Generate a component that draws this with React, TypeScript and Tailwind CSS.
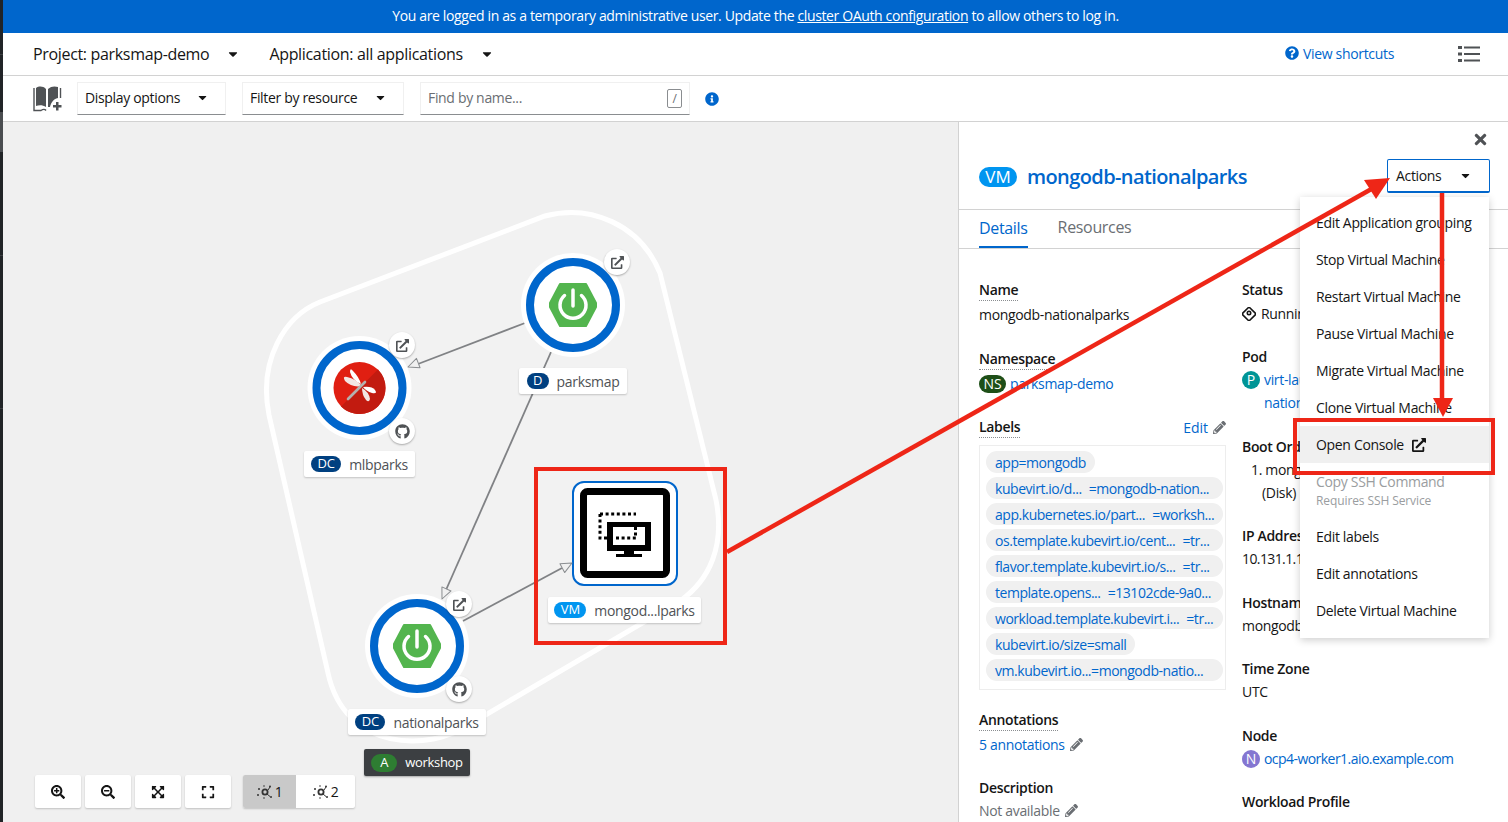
import { FaCaretDown, FaExpand, FaExpandArrowsAlt, FaExternalLinkAlt, FaGithub, FaInfoCircle, FaPencilAlt, FaQuestionCircle, FaSearchMinus, FaSearchPlus, FaTimes } from 'react-icons/fa'

const labels = [
    { text: 'app=mongodb' },
    { text: 'kubevirt.io/d... =mongodb-nation...', full: true },
    { text: 'app.kubernetes.io/part... =worksh...', full: true },
    { text: 'os.template.kubevirt.io/cent... =tr...', full: true },
    { text: 'flavor.template.kubevirt.io/s... =tr...', full: true },
    { text: 'template.opens... =13102cde-9a0...', full: true },
    { text: 'workload.template.kubevirt.i... =tr...', full: true },
    { text: 'kubevirt.io/size=small' },
    { text: 'vm.kubevirt.io...=mongodb-natio...', full: true },
]

const menuItems = [
    'Edit Application grouping',
    'Stop Virtual Machine',
    'Restart Virtual Machine',
    'Pause Virtual Machine',
    'Migrate Virtual Machine',
    'Clone Virtual Machine',
]

function Badge({ text, color, className = '' }: { text: string; color: string; className?: string }) {
    return (
        <span className={`inline-flex shrink-0 items-center justify-center rounded-full tracking-normal text-white ${color} ${className}`}>
            {text}
        </span>
    )
}

function NodeLabel({ badge, color, text, className, badgeWidth }: { badge: string; color: string; text: string; className: string; badgeWidth: string }) {
    return (
        <div className={`absolute flex h-[26px] items-center justify-center gap-2 rounded-[2px] bg-white text-[14px] text-[#4f5255] shadow-[0_1px_2px_rgba(0,0,0,0.2)] ${className}`}>
            <Badge text={badge} color={color} className={`h-[16px] text-[13px] ${badgeWidth}`} />
            <span>{text}</span>
        </div>
    )
}

function Decorator({ className, children }: { className: string; children: React.ReactNode }) {
    return (
        <div className={`absolute flex h-[26px] w-[26px] items-center justify-center rounded-full bg-white text-[15px] text-[#4f5255] shadow-[0_1px_2px_rgba(0,0,0,0.3)] ${className}`}>
            {children}
        </div>
    )
}

function Spring({ cx, cy }: { cx: number; cy: number }) {
    return (
        <g transform={`translate(${cx} ${cy})`}>
            <path d="M-13 -21 L13 -21 L23 -2 L23 2 L13 21 L-13 21 L-23 2 L-23 -2 Z" fill="#53b54e" stroke="#53b54e" strokeWidth="2" strokeLinejoin="round" />
            <path d="M-8.5 -9.5 A13 13 0 1 0 8.5 -9.5" fill="none" stroke="#fff" strokeWidth="3.5" strokeLinecap="round" />
            <path d="M0 -15 L0 1" stroke="#fff" strokeWidth="3.5" strokeLinecap="round" />
        </g>
    )
}

function Ring({ cx, cy, children }: { cx: number; cy: number; children: React.ReactNode }) {
    return (
        <g>
            <circle cx={cx} cy={cy} r="52" fill="#fff" />
            <circle cx={cx} cy={cy} r="43" fill="#fff" stroke="#0066cc" strokeWidth="8" />
            {children}
        </g>
    )
}

function Arrow({ x, y, angle }: { x: number; y: number; angle: number }) {
    return (
        <path transform={`translate(${x} ${y}) rotate(${angle})`} d="M0 0 L-11 -5 L-11 5 Z" fill="#f0f0f0" stroke="#8a8d90" strokeWidth="1" strokeLinejoin="round" />
    )
}

function Graph() {
    return (
        <svg className="absolute left-0 top-0" width="955" height="700" viewBox="3 122 955 700">
            <path
                d="M320 302 L545 216 C590 204 640 224 660 273 L716 500 C725 545 710 580 680 601 L470 724 C430 752 345 752 328 673 L269 415 C258 360 285 316 320 302 Z"
                fill="#f2f2f2"
                stroke="#fff"
                strokeWidth="5"
            />
            <path d="M525 323 L418 364" stroke="#808285" strokeWidth="1.8" />
            <path d="M551 352 L446 590" stroke="#808285" strokeWidth="1.8" />
            <path d="M463 621 L562 568" stroke="#808285" strokeWidth="1.8" />
            <Ring cx={573} cy={305}>
                <Spring cx={573} cy={305} />
            </Ring>
            <Ring cx={359.5} cy={388}>
                <circle cx={359.5} cy={388} r="26" fill="#e01f12" />
                <path d="M341.1 406.4 A26 26 0 0 0 385.5 388 A26 26 0 0 0 377.9 369.6 Z" fill="#c21b10" />
                <path d="M362 386 Q352 388 345 381 Q342 376 347 377 Q356 379 362 386 Z" fill="#f2e6e3" />
                <path d="M361 384 Q352 380 350 372 Q350 367 353 371 Q359 377 361 384 Z" fill="#fff" />
                <path d="M363 387 Q372 386 375 390 Q378 394 372 393 Q366 391 363 387 Z" fill="#fff" />
                <path d="M362 388 Q369 392 370 399 Q369 403 366 400 Q362 395 362 388 Z" fill="#f2e6e3" />
                <path d="M348 399 L365 382" stroke="#b4b0ae" strokeWidth="2.6" strokeLinecap="round" />
            </Ring>
            <Ring cx={417} cy={646}>
                <Spring cx={417} cy={646} />
            </Ring>
            <rect x="573" y="482" width="104" height="103" rx="11" fill="#fff" stroke="#0066cc" strokeWidth="2" />
            <rect x="583.5" y="491.5" width="83" height="83" rx="4" fill="#fff" stroke="#000" strokeWidth="7" />
            <path d="M600 514 H636 M600 514 V538 H607" stroke="#000" strokeWidth="3" strokeDasharray="3 2.6" fill="none" />
            <path d="M607 522 H651 V551 H607 Z M613 527 V545 H645 V527 Z" fill="#000" fillRule="evenodd" />
            <path d="M624 551 H634 V554 H642 V557 H616 V554 H624 Z" fill="#000" />
            <path d="M616 538 H637 M635.5 527 V537" stroke="#000" strokeWidth="3" strokeDasharray="3 2.6" fill="none" />
            <Arrow x={408} y={367} angle={159} />
            <Arrow x={442} y={599} angle={114} />
            <Arrow x={572} y={563} angle={-28} />
        </svg>
    )
}

function ClusterIcon() {
    return (
        <svg width="16" height="16" viewBox="0 0 16 16" fill="#333">
            <circle cx="8" cy="8" r="2.6" fill="none" stroke="#333" strokeWidth="1.8" />
            <circle cx="2" cy="5" r="1" />
            <circle cx="1" cy="11" r="1" />
            <circle cx="13" cy="2.5" r="1" />
            <circle cx="14" cy="13" r="1" />
            <circle cx="7" cy="2" r="0.8" />
            <circle cx="7" cy="14" r="0.8" />
            <path d="M11 6 L13 3 M10 10 L13 12.5" stroke="#333" strokeWidth="1" />
        </svg>
    )
}

function ToolButton({ children }: { children: React.ReactNode }) {
    return (
        <button className="flex h-[33px] w-[46px] items-center justify-center rounded-[2px] bg-white text-[14px] text-[#151515] shadow-[0_1px_2px_rgba(0,0,0,0.2)]">
            {children}
        </button>
    )
}

function TopologyBookIcon() {
    return (
        <svg width="30" height="28" viewBox="0 0 30 28" fill="#4f5255">
            <path d="M3 3 C6 1 10 1 13 4 V22 C10 20 6 20 3 21 Z" />
            <path d="M15 4 C18 1 22 1 25 2 V13 C20 14 18 18 17 22 L15 22 Z" />
            <path d="M1 3 V25.5 H8 C10 24 12 24 13 25.5" fill="none" stroke="#4f5255" strokeWidth="1.4" />
            <path d="M27.5 3 V13" fill="none" stroke="#4f5255" strokeWidth="1.4" />
            <path d="M23 17 H25.5 V20 H28.5 V22.5 H25.5 V25.5 H23 V22.5 H20 V20 H23 Z" />
        </svg>
    )
}

function Dropdown({ text, className }: { text: string; className: string }) {
    return (
        <div className={`flex h-[33px] items-center justify-between border border-[#f0f0f0] border-b-[#8a8d90] bg-white pb-[2px] pl-[7px] pr-4 text-[14px] text-[#151515] ${className}`}>
            <span>{text}</span>
            <FaCaretDown className="text-[13px]" />
        </div>
    )
}

function Term({ children, dotted = true }: { children: React.ReactNode; dotted?: boolean }) {
    return (
        <div className={`w-fit text-[14px] font-semibold leading-[21px] text-[#151515] ${dotted ? 'border-b border-dotted border-[#8a8d90]' : ''}`}>
            {children}
        </div>
    )
}

export default function App() {
    return (
        <div className="relative h-[822px] w-[1508px] overflow-hidden bg-white font-['Open_Sans',sans-serif] tracking-[-0.33px]">
            <div className="flex h-full">
                <div className="flex w-[3px] shrink-0 flex-col bg-[#212427]">
                    <div className="h-[55px] border-b border-[#3c3f42]" />
                    <div className="h-[57px]" />
                    <div className="h-[40px] bg-[#4a4d50]" />
                    <div className="h-[104px] border-b border-[#3c3f42]" />
                    <div className="h-[153px] border-b border-[#3c3f42]" />
                </div>
                <div className="flex min-w-0 flex-1 flex-col">
                    <div className="flex h-[33px] shrink-0 items-center justify-center bg-[#0066cc] pb-[2px] text-[14px] tracking-[-0.36px] text-white">
                        You are logged in as a temporary administrative user. Update the&nbsp;
                        <span className="underline">cluster OAuth configuration</span>&nbsp;to allow others to log in.
                    </div>
                    <div className="flex h-[43px] shrink-0 items-center border-b border-[#d2d2d2] pl-[30px] pr-[28px] text-[16px] text-[#151515]">
                        <span>Project: parksmap-demo</span>
                        <FaCaretDown className="ml-[17px] text-[14px]" />
                        <span className="ml-[29px]">Application: all applications</span>
                        <FaCaretDown className="ml-[17px] text-[14px]" />
                        <span className="ml-auto flex items-center gap-[4px] pb-[2px] text-[14px] text-[#0066cc]">
                            <FaQuestionCircle className="text-[14px]" />
                            View shortcuts
                        </span>
                        <svg className="ml-[64px]" width="22" height="18" viewBox="0 0 22 18" fill="#4f5255">
                            <rect x="0" y="1" width="4" height="3" />
                            <rect x="6" y="1.5" width="16" height="2" />
                            <rect x="0" y="7.5" width="4" height="3" />
                            <rect x="6" y="8" width="16" height="2" />
                            <rect x="0" y="14" width="4" height="3" />
                            <rect x="6" y="14.5" width="16" height="2" />
                        </svg>
                    </div>
                    <div className="flex h-[46px] shrink-0 items-center border-b border-[#d2d2d2] pl-[30px]">
                        <TopologyBookIcon />
                        <Dropdown text="Display options" className="ml-[14px] w-[149px]" />
                        <Dropdown text="Filter by resource" className="ml-[16px] w-[162px]" />
                        <div className="ml-[16px] flex h-[33px] w-[270px] items-center justify-between border border-[#f0f0f0] border-b-[#8a8d90] pb-[2px] pl-[7px] pr-[7px] text-[14px] text-[#6a6e73]">
                            <span>Find by name...</span>
                            <span className="mt-[2px] flex h-[19px] w-[15px] items-center justify-center rounded-[2px] border border-[#8a8d90] text-[12px]">/</span>
                        </div>
                        <FaInfoCircle className="ml-[15px] text-[14px] text-[#0066cc]" />
                    </div>
                    <div className="flex min-h-0 flex-1">
                        <div className="relative w-[955px] shrink-0 bg-[#f0f0f0]">
                            <Graph />
                            <Decorator className="left-[601px] top-[127px]"><FaExternalLinkAlt className="text-[13px]" /></Decorator>
                            <Decorator className="left-[386px] top-[210px]"><FaExternalLinkAlt className="text-[13px]" /></Decorator>
                            <Decorator className="left-[386px] top-[296px]"><FaGithub /></Decorator>
                            <Decorator className="left-[443px] top-[469px]"><FaExternalLinkAlt className="text-[13px]" /></Decorator>
                            <Decorator className="left-[443px] top-[554px]"><FaGithub /></Decorator>
                            <NodeLabel badge="D" color="bg-[#004080]" badgeWidth="w-[22px]" text="parksmap" className="left-[516px] top-[246px] w-[108px]" />
                            <NodeLabel badge="DC" color="bg-[#004080]" badgeWidth="w-[30px]" text="mlbparks" className="left-[301px] top-[329px] w-[111px]" />
                            <NodeLabel badge="DC" color="bg-[#004080]" badgeWidth="w-[30px]" text="nationalparks" className="left-[345px] top-[587px] w-[138px]" />
                            <NodeLabel badge="VM" color="bg-[#0095f0]" badgeWidth="w-[32px]" text="mongod...lparks" className="left-[545px] top-[475px] w-[153px]" />
                            <div className="absolute left-[361px] top-[627px] flex h-[27px] w-[106px] items-center justify-center gap-2 rounded-[2px] bg-[#3c3f42] text-[13px] text-white shadow-[0_1px_2px_rgba(0,0,0,0.3)]">
                                <Badge text="A" color="bg-[#2e7d32]" className="h-[18px] w-[26px] text-[13px]" />
                                workshop
                            </div>
                            <div className="absolute bottom-[14px] left-[32px] flex gap-1">
                                <ToolButton><FaSearchPlus /></ToolButton>
                                <ToolButton><FaSearchMinus /></ToolButton>
                                <ToolButton><FaExpandArrowsAlt /></ToolButton>
                                <ToolButton><FaExpand /></ToolButton>
                                <div className="ml-2 flex h-[33px] overflow-hidden rounded-[2px] bg-white text-[14px] text-[#151515] shadow-[0_1px_2px_rgba(0,0,0,0.2)]">
                                    <div className="flex w-[53px] items-center justify-center gap-[2px] bg-[#c9c9c9]"><ClusterIcon />1</div>
                                    <div className="flex w-[59px] items-center justify-center gap-[2px]"><ClusterIcon />2</div>
                                </div>
                            </div>
                        </div>
                        <div className="relative min-w-0 flex-1 border-l border-[#d2d2d2] bg-white">
                            <FaTimes className="absolute right-[19px] top-[9px] text-[17px] text-[#4f5255]" />
                            <div className="flex h-[87px] items-center pl-[20px] pt-[22px]">
                                <Badge text="VM" color="bg-[#0095f0]" className="h-[20px] w-[38px] text-[17px] font-medium" />
                                <span className="ml-[10px] text-[20px] font-semibold leading-[28px] tracking-[-0.6px] text-[#0066cc]">mongodb-nationalparks</span>
                            </div>
                            <div className="flex h-[40px] gap-[30px] border-y border-[#d2d2d2] pl-[20px] text-[16px] text-[#6a6e73]">
                                <span className="flex items-center border-b-2 border-[#0066cc] pb-[1px] text-[#0066cc]">Details</span>
                                <span className="flex items-center pb-[4px]">Resources</span>
                            </div>
                            <div className="grid grid-cols-[247px_1fr] gap-4 pl-[20px] pt-[30px] text-[14px] text-[#151515]">
                                <div>
                                    <Term>Name</Term>
                                    <div className="mt-[3px] leading-[21px]">mongodb-nationalparks</div>
                                    <div className="mt-[23px]"><Term>Namespace</Term></div>
                                    <div className="mt-[3px] flex items-center gap-[4px] leading-[21px]">
                                        <Badge text="NS" color="bg-[#1e4f18]" className="h-[18px] w-[27px] text-[14px]" />
                                        <span className="text-[#0066cc]">parksmap-demo</span>
                                    </div>
                                    <div className="mt-[22px] flex items-center justify-between">
                                        <Term>Labels</Term>
                                        <span className="flex items-center gap-[5px] tracking-normal text-[#0066cc]">Edit <FaPencilAlt className="text-[13px] text-[#6a6e73]" /></span>
                                    </div>
                                    <div className="mt-[7px] flex flex-col items-start gap-[4px] border border-[#ededed] pb-[8px] pl-[6px] pr-[2px] pt-[5px]">
                                        {labels.map((label) => (
                                            <span key={label.text} className={`flex h-[22px] items-center overflow-hidden whitespace-nowrap rounded-full bg-[#f0f0f0] px-[9px] text-[14px] tracking-[-0.46px] text-[#0066cc] [word-spacing:4px] ${label.full ? 'w-full' : ''}`}>
                                                {label.text}
                                            </span>
                                        ))}
                                    </div>
                                    <div className="mt-[19px]"><Term>Annotations</Term></div>
                                    <div className="mt-[3px] flex items-center gap-[5px] leading-[21px] text-[#0066cc]">5 annotations <FaPencilAlt className="text-[13px] text-[#6a6e73]" /></div>
                                    <div className="mt-[22px]"><Term dotted={false}>Description</Term></div>
                                    <div className="mt-[2px] flex items-center gap-[5px] leading-[21px] text-[#6a6e73]">Not available <FaPencilAlt className="text-[13px]" /></div>
                                </div>
                                <div>
                                    <Term dotted={false}>Status</Term>
                                    <div className="mt-[3px] flex items-center gap-[5px] leading-[21px]">
                                        <svg width="14" height="14" viewBox="0 0 14 14" fill="none" stroke="#151515" strokeWidth="1.6">
                                            <rect x="2" y="2" width="10" height="10" rx="1.5" transform="rotate(45 7 7)" />
                                            <circle cx="7" cy="6" r="1.7" />
                                        </svg>
                                        Running
                                    </div>
                                    <div className="mt-[22px]"><Term dotted={false}>Pod</Term></div>
                                    <div className="mt-[2px] flex items-center gap-[4px] leading-[21px]">
                                        <Badge text="P" color="bg-[#009596]" className="h-[18px] w-[18px] text-[14px]" />
                                        <span className="text-[#0066cc]">virt-launcher-mongodb</span>
                                    </div>
                                    <div className="mt-[2px] pl-[22px] leading-[21px] text-[#0066cc]">nationalparks</div>
                                    <div className="mt-[23px]"><Term dotted={false}>Boot Order</Term></div>
                                    <div className="mt-[2px] pl-[9px] leading-[21px]">1. mongodb</div>
                                    <div className="mt-[2px] pl-[20px] leading-[21px]">(Disk)</div>
                                    <div className="mt-[22px]"><Term dotted={false}>IP Address</Term></div>
                                    <div className="mt-[2px] leading-[21px] tracking-[-0.6px]">10.131.1.192</div>
                                    <div className="mt-[23px]"><Term dotted={false}>Hostname</Term></div>
                                    <div className="mt-[2px] leading-[21px]">mongodb</div>
                                    <div className="mt-[22px]"><Term dotted={false}>Time Zone</Term></div>
                                    <div className="mt-[2px] leading-[21px]">UTC</div>
                                    <div className="mt-[23px]"><Term dotted={false}>Node</Term></div>
                                    <div className="mt-[2px] flex items-center gap-[4px] leading-[21px]">
                                        <Badge text="N" color="bg-[#8476d1]" className="h-[18px] w-[18px] text-[14px]" />
                                        <span className="tracking-[-0.55px] text-[#0066cc]">ocp4-worker1.aio.example.com</span>
                                    </div>
                                    <div className="mt-[22px]"><Term dotted={false}>Workload Profile</Term></div>
                                </div>
                            </div>
                            <div className="absolute left-[428px] top-[37px] flex h-[34px] w-[103px] items-center justify-between rounded-[2px] border border-[#0066cc] border-b-2 pl-2 pr-[17px] text-[14px] text-[#151515]">
                                Actions
                                <FaCaretDown className="text-[13px]" />
                            </div>
                            <div className="absolute left-[341px] top-[75px] w-[189px] bg-white pb-[9px] pt-[7px] text-[14px] text-[#151515] shadow-[0_2px_8px_rgba(0,0,0,0.2)]">
                                {menuItems.map((item) => (
                                    <div key={item} className="flex h-[37px] items-center whitespace-nowrap pl-4">{item}</div>
                                ))}
                                <div className="flex h-[37px] items-center gap-2 bg-[#f0f0f0] pl-4">Open Console <FaExternalLinkAlt className="text-[14px]" /></div>
                                <div className="flex h-[55px] flex-col justify-center pl-4 text-[#9a9da0]">
                                    <span className="leading-[20px]">Copy SSH Command</span>
                                    <span className="text-[12px] leading-[18px] tracking-[-0.1px]">Requires SSH Service</span>
                                </div>
                                {['Edit labels', 'Edit annotations', 'Delete Virtual Machine'].map((item) => (
                                    <div key={item} className="flex h-[37px] items-center pl-4">{item}</div>
                                ))}
                            </div>
                        </div>
                    </div>
                </div>
            </div>
            {/* red annotations drawn over the screenshot */}
            <svg className="pointer-events-none absolute left-0 top-0" width="1508" height="822">
                <rect x="536" y="469" width="189" height="174" fill="none" stroke="#ee2617" strokeWidth="4" />
                <rect x="1295" y="420" width="198" height="53" fill="none" stroke="#ee2617" strokeWidth="4" />
                <path d="M727 552 L1375 187" stroke="#ee2617" strokeWidth="4.5" />
                <path d="M1390 178 L1364 180 L1376 199 Z" fill="#ee2617" />
                <path d="M1442 193 V405" stroke="#ee2617" strokeWidth="4.5" />
                <path d="M1433 398 H1453 L1443 417 Z" fill="#ee2617" />
            </svg>
        </div>
    )
}
